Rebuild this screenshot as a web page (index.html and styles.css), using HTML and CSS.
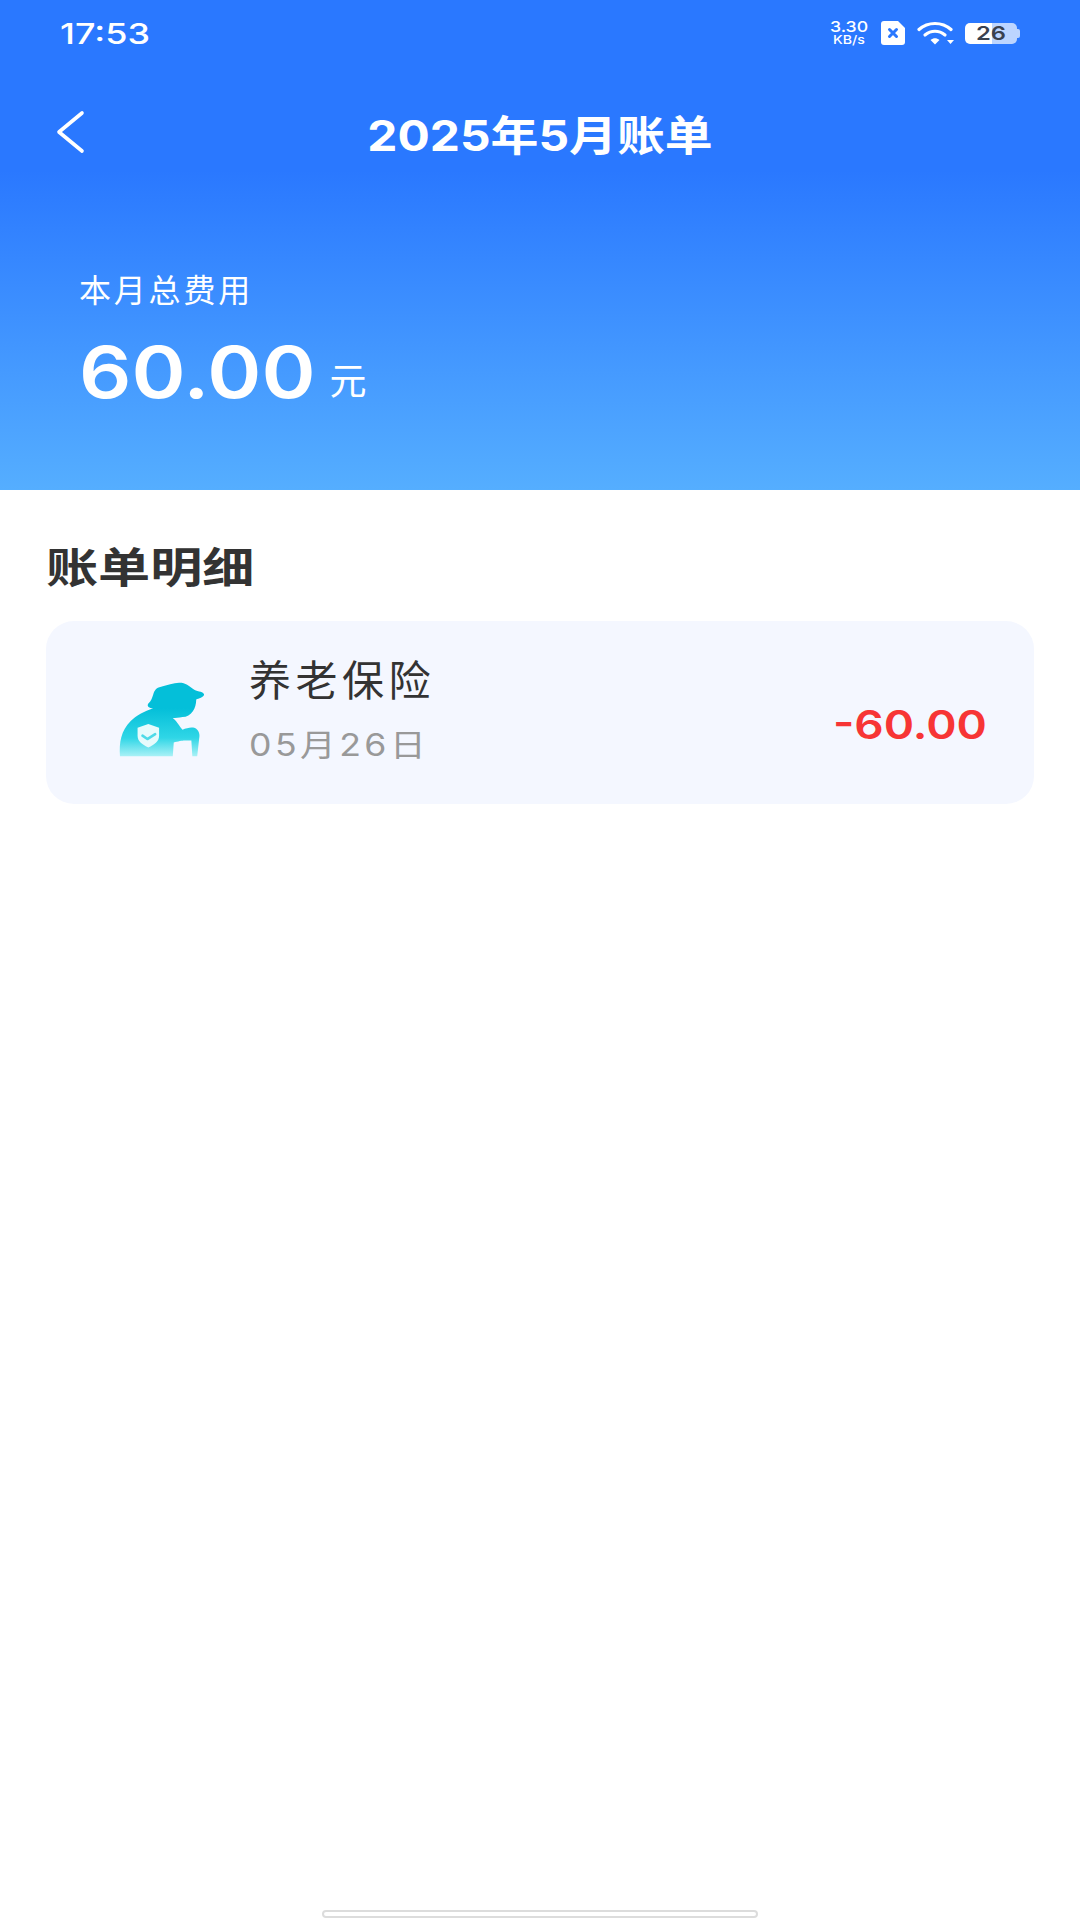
FILE: index.html
```html
<!DOCTYPE html>
<html lang="zh-CN">
<head>
    <meta charset="UTF-8">
    <meta name="viewport" content="width=device-width, initial-scale=1.0">
    <title>2025年5月账单</title>
    <link rel="stylesheet" href="styles.css">
</head>
<body>
    <div class="page">
        <header class="hero">
            <div class="status-bar">
                <span class="time wide">17:53</span>
                <div class="status-icons">
                    <div class="speed"><span>3.30</span><span>KB/s</span></div>
                    <svg class="sim" viewBox="0 0 24 24">
                        <path d="M3 0h14l7 7v14a3 3 0 0 1-3 3H3a3 3 0 0 1-3-3V3a3 3 0 0 1 3-3z" fill="#fff"/>
                        <path d="M8.500 8.500l7 7M15.500 8.500l-7 7" stroke="#2a78ff" stroke-width="3" stroke-linecap="round"/>
                    </svg>
                    <svg class="wifi" viewBox="0 0 38 24">
                        <path d="M2 8.500C11 .5 25 .5 34 8.500" fill="none" stroke="#fff" stroke-width="3.200" stroke-linecap="round"/>
                        <path d="M8 14c6-5 14-5 20 0" fill="none" stroke="#fff" stroke-width="3.200" stroke-linecap="round"/>
                        <path d="M13.500 19c3-2.500 6-2.500 9 0L18 23.500z" fill="#fff"/>
                        <path d="M30 19h7l-3.500 4z" fill="#fff"/>
                    </svg>
                    <div class="battery">
                        <div class="battery-body"><span class="battery-num">26</span></div>
                        <div class="battery-tip"></div>
                    </div>
                </div>
            </div>
            <div class="nav-bar">
                <svg class="back" viewBox="0 0 30 44">
                    <path d="M27 3L4 22l23 19" fill="none" stroke="#fff" stroke-width="3.600" stroke-linecap="round" stroke-linejoin="round"/>
                </svg>
                <h1>2025年5月账单</h1>
            </div>
            <div class="summary">
                <p class="summary-label">本月总费用</p>
                <div class="summary-total">
                    <span class="summary-num">60.00</span>
                    <span class="summary-unit">元</span>
                </div>
            </div>
        </header>

        <main class="detail">
            <h2 class="wide">账单明细</h2>
            <div class="bill-card">
                <svg class="bill-icon" viewBox="0 0 90 78">
                    <defs>
                        <linearGradient id="iconFill" x1="0" y1="0" x2="0" y2="1">
                            <stop offset="0.350" stop-color="#04bfd9"/>
                            <stop offset="0.750" stop-color="#2fd6e6"/>
                            <stop offset="1" stop-color="#a8f1f6"/>
                        </linearGradient>
                    </defs>
                    <path fill="url(#iconFill)" d="M30 22C33 20 34 16 35 13C36 9 38 6 43 5C50 3 58 0 64 1C70 2 73 6 77 8C81 10 87 10 87 13C87 16 81 17 79 18C79 27 74 36 65 36C61 37 58 37 55 37C60 41 62 46 65 49C69 47 74 46 77 47C82 49 83 54 82 58L80 76H75L74 60H67C65 60 60 61 56 62L55 76H1C0 62 2 50 12 40C17 35 26 30 35 27C31 27 28 25 30 22Z"/>
                    <path fill="#e7fbfc" d="M30 43l11 4v8c0 6-5 9-11 12-6-3-11-6-11-12v-8z"/>
                    <path fill="none" stroke="#4fdbe8" stroke-width="2.600" stroke-linecap="round" stroke-linejoin="round" d="M24 55l5 3.500 8-5"/>
                </svg>
                <div class="bill-info">
                    <div class="bill-name">养老保险</div>
                    <div class="bill-date">05月26日</div>
                </div>
                <div class="bill-amount">-60.00</div>
            </div>
        </main>

        <div class="home-bar"></div>
    </div>
</body>
</html>
```

FILE: styles.css
```css
* {
    box-sizing: border-box;
}
body {
    margin: 0;
    background-color: #fff;
    font-family: "Inter", "Noto Sans CJK SC", sans-serif;
}
.page {
    width: 1080px;
    height: 1920px;
    overflow: hidden;
    display: flex;
    flex-direction: column;
}
.wide {
    display: inline-block;
    transform: scaleX(1.24);
    transform-origin: left center;
}
.hero {
    height: 490px;
    color: #fff;
    background: linear-gradient(180deg, #2a78ff 0, #2a78ff 170px, #55aeff 490px);
}
.status-bar {
    height: 66px;
    padding: 0 60px 0 60px;
    display: flex;
    justify-content: space-between;
    align-items: center;
}
.time {
    font-size: 29px;
    font-weight: 500;
}
.status-icons {
    display: flex;
    align-items: center;
}
.speed {
    width: 38px;
    display: flex;
    flex-direction: column;
    align-items: center;
    font-weight: 500;
    transform: scaleX(1.18);
}
.speed span:first-child {
    font-size: 15px;
    line-height: 14px;
}
.speed span:last-child {
    font-size: 12px;
    line-height: 12px;
}
.sim {
    width: 24px;
    height: 24px;
    margin-left: 13px;
}
.wifi {
    width: 38px;
    height: 24px;
    margin-left: 12px;
}
.battery {
    margin-left: 10px;
    display: flex;
    align-items: center;
}
.battery-body {
    width: 52px;
    height: 21px;
    border-radius: 5px;
    background: linear-gradient(90deg, #fff 0, #fff 27px, #bcd5ff 27px);
    display: flex;
    justify-content: center;
    align-items: center;
}
.battery-num {
    color: #3a4250;
    font-size: 19px;
    font-weight: 600;
    transform: scaleX(1.25);
}
.battery-tip {
    width: 3px;
    height: 9px;
    background: #bcd5ff;
    border-radius: 0 2px 2px 0;
}
.nav-bar {
    height: 100px;
    margin-top: 16px;
    padding-left: 55px;
    position: relative;
    display: flex;
    align-items: center;
}
.back {
    width: 30px;
    height: 44px;
}
.nav-bar h1 {
    position: absolute;
    left: 50%;
    margin: 0;
    white-space: nowrap;
    font-size: 42px;
    font-weight: 700;
    transform: translateX(-50%) scaleX(1.14);
}
.summary {
    padding: 88px 0 0 79px;
}
.summary-label {
    margin: 0;
    font-size: 32px;
    line-height: 42px;
    letter-spacing: 2.800px;
}
.summary-total {
    margin-top: 13px;
    display: flex;
    align-items: center;
}
.summary-num {
    font-size: 72px;
    line-height: 94px;
    font-weight: 600;
    transform: scaleX(1.14);
    transform-origin: left center;
}
.summary-unit {
    margin: 14px 0 0 43px;
    font-size: 37px;
}
.detail {
    flex: 1;
    padding: 0 46px;
}
.detail h2 {
    margin: 0;
    padding-top: 48px;
    line-height: 60px;
    font-size: 42px;
    font-weight: 700;
    color: #333;
}
.bill-card {
    margin-top: 23px;
    height: 183px;
    padding: 0 47px 0 73px;
    display: flex;
    align-items: center;
    background-color: #f4f7ff;
    border-radius: 28px;
}
.bill-icon {
    width: 88px;
    height: 78px;
    margin-top: 14px;
}
.bill-info {
    margin-left: 42px;
    flex: 1;
}
.bill-name {
    margin-top: -4px;
    font-size: 42px;
    line-height: 52px;
    letter-spacing: 4.500px;
    color: #333;
}
.bill-date {
    margin-top: 17px;
    font-size: 31px;
    line-height: 42px;
    letter-spacing: 3px;
    color: #999;
    transform: scaleX(1.15);
    transform-origin: left center;
}
.bill-amount {
    margin-top: 24px;
    font-size: 40px;
    font-weight: 600;
    color: #f73535;
    transform: scaleX(1.15);
    transform-origin: right center;
}
.home-bar {
    width: 436px;
    height: 8px;
    margin: 0 auto 2px;
    border: 2px solid #dcdcdc;
    border-radius: 4px;
}
```
